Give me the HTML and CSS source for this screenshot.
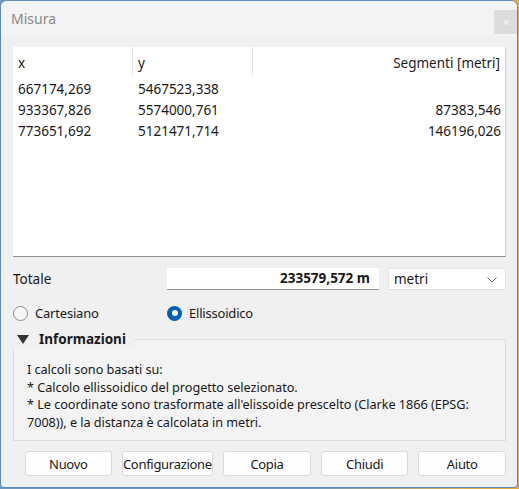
FILE: index.html
```html
<!DOCTYPE html>
<html lang="it">
<head>
<meta charset="utf-8">
<title>Misura</title>
<link rel="stylesheet" href="styles.css">
</head>
<body>
<div class="window">
  <div class="titlebar">
    <span class="title">Misura</span>
    <div class="close">&#x2715;</div>
  </div>
  <div class="content">
    <div class="table">
      <div class="thead">
        <div class="th c1">x</div>
        <div class="th c2">y</div>
        <div class="th c3">Segmenti [metri]</div>
      </div>
      <div class="tbody">
        <div class="tr"><div class="td c1">667174,269</div><div class="td c2">5467523,338</div><div class="td c3"></div></div>
        <div class="tr"><div class="td c1">933367,826</div><div class="td c2">5574000,761</div><div class="td c3">87383,546</div></div>
        <div class="tr"><div class="td c1">773651,692</div><div class="td c2">5121471,714</div><div class="td c3">146196,026</div></div>
      </div>
    </div>

    <div class="total-row">
      <span class="total-label">Totale</span>
      <div class="total-input">233579,572 m</div>
      <div class="combo">
        <span>metri</span>
        <svg class="chev" width="10" height="6" viewBox="0 0 10 6"><path d="M0.5 0.5 L5 5 L9.5 0.5" fill="none" stroke="#666" stroke-width="1"/></svg>
      </div>
    </div>

    <div class="radio-row">
      <label class="radio"><span class="circle"></span>Cartesiano</label>
      <label class="radio checked"><span class="circle"><span class="dot"></span></span>Ellissoidico</label>
    </div>

    <div class="group">
      <div class="legend">
        <svg width="12" height="9" viewBox="0 0 12 9"><path d="M0 0 H12 L6 9 Z" fill="#333"/></svg>
        <span>Informazioni</span>
      </div>
      <div class="info">
        I calcoli sono basati su:<br>
        * Calcolo ellissoidico del progetto selezionato.<br>
        * Le coordinate sono trasformate all'elissoide prescelto (Clarke 1866 (EPSG:<br>
        7008)), e la distanza è calcolata in metri.
      </div>
    </div>

    <div class="buttons">
      <button class="btn b1">Nuovo</button>
      <button class="btn b2">Configurazione</button>
      <button class="btn b3">Copia</button>
      <button class="btn b4">Chiudi</button>
      <button class="btn b5">Aiuto</button>
    </div>
  </div>
</div>
</body>
</html>
```

FILE: styles.css
```css
html, body {
  margin: 0;
  padding: 0;
}
body {
  width: 519px;
  height: 489px;
  overflow: hidden;
  background: linear-gradient(90deg, #6f98be 0%, #6f98be 60%, #d9b04e 90%, #e2a93a 100%);
  font-family: "Noto Sans", "Open Sans", sans-serif;
  font-size: 13.5px;
  color: #1a1a1a;
}
.window {
  box-sizing: border-box;
  width: 518px;
  height: 488px;
  border: 1px solid #5f8cb4;
  border-radius: 7px 7px 4px 4px;
  background: #f0f0f0;
  overflow: hidden;
  display: flex;
  flex-direction: column;
}
.titlebar {
  height: 36px;
  flex: none;
  background: #f3f3f3;
  display: flex;
  align-items: center;
  justify-content: space-between;
  padding-left: 10px;
  padding-right: 0;
}
.title {
  color: #8a8a8a;
  font-size: 14px;
  margin-top: -1px;
}
.close {
  width: 23px;
  height: 24px;
  margin-top: 6px;
  background: #dcdcdc;
  color: #f4f4f4;
  font-size: 10px;
  display: flex;
  align-items: center;
  justify-content: center;
  margin-right: 0;
}
.content {
  flex: 1;
  padding: 10px 11px 0 12px;
  display: flex;
  flex-direction: column;
}
.table {
  height: 210px;
  background: #fff;
  border-right: 1px solid #cfcfcf;
  border-bottom: 1px solid #8f8f8f;
  box-sizing: border-box;
}
.thead, .tr {
  display: flex;
}
.thead {
  height: 29px;
  margin-bottom: 2px;
}
.th {
  box-sizing: border-box;
  height: 29px;
  display: flex;
  align-items: flex-end;
  padding: 0 5px 4px;
  border-right: 1px solid #e6e6e6;
}
.th.c3 {
  border-right: none;
  justify-content: flex-end;
}
.c1 { width: 120px; }
.c2 { width: 120px; }
.c3 { flex: 1; text-align: right; }
.tr { height: 21px; align-items: center; }
.td {
  box-sizing: border-box;
  padding: 0 5px;
  white-space: nowrap;
}
.td.c3 { padding-right: 4px; }
.total-row {
  margin-top: 11px;
  height: 22px;
  display: flex;
  align-items: center;
}
.total-label {
  width: 154px;
}
.total-input {
  width: 212px;
  height: 22px;
  box-sizing: border-box;
  background: #fff;
  border-bottom: 1px solid #8c8c8c;
  font-weight: bold;
  text-align: right;
  padding-right: 9px;
  line-height: 21px;
}
.combo {
  margin-left: 9px;
  width: 118px;
  height: 22px;
  box-sizing: border-box;
  background: #fff;
  border: 1px solid #e3e3e3;
  display: flex;
  align-items: center;
  justify-content: space-between;
  padding: 0 8px 0 5px;
  line-height: 20px;
}
.chev { margin-top: 1px; }
.radio-row {
  margin-top: 15px;
  height: 16px;
  display: flex;
  align-items: center;
  font-size: 13px;
  letter-spacing: -0.2px;
}
.radio {
  display: flex;
  align-items: center;
  gap: 7px;
}
.radio:first-child { width: 154px; }
.circle {
  box-sizing: border-box;
  width: 15px;
  height: 15px;
  border-radius: 50%;
  border: 1px solid #8a8a8a;
  background: #f7f7f7;
  display: flex;
  align-items: center;
  justify-content: center;
}
.checked .circle {
  border: none;
  background: #005fb8;
}
.dot {
  width: 6px;
  height: 6px;
  border-radius: 50%;
  background: #fff;
}
.group {
  position: relative;
  margin-top: 18px;
  height: 102px;
  box-sizing: border-box;
  border: 1px solid #dedede;
  background: #f3f3f3;
  padding: 21px 12px 0 13px;
}
.legend {
  position: absolute;
  left: -1px;
  top: -10px;
  width: 121px;
  height: 17px;
  background: #f0f0f0;
  display: flex;
  align-items: center;
  gap: 10px;
  padding-left: 4px;
  box-sizing: border-box;
  font-weight: bold;
}
.legend svg { margin-top: 1px; }
.info {
  font-size: 12.7px;
  line-height: 17.5px;
  letter-spacing: -0.05px;
  color: #1a1a1a;
}
.buttons {
  margin-top: 10px;
  display: flex;
  padding-left: 12px;
  gap: 10px;
}
.btn {
  height: 25px;
  box-sizing: border-box;
  background: #fdfdfd;
  border: 1px solid #dadada;
  border-radius: 3px;
  font-family: inherit;
  font-size: 13px;
  color: #1a1a1a;
  padding: 0;
  letter-spacing: -0.3px;
}
.b1 { width: 87px; }
.b2 { width: 92px; }
.b3 { width: 88px; }
.b4 { width: 88px; }
.b5 { width: 88px; }
```
